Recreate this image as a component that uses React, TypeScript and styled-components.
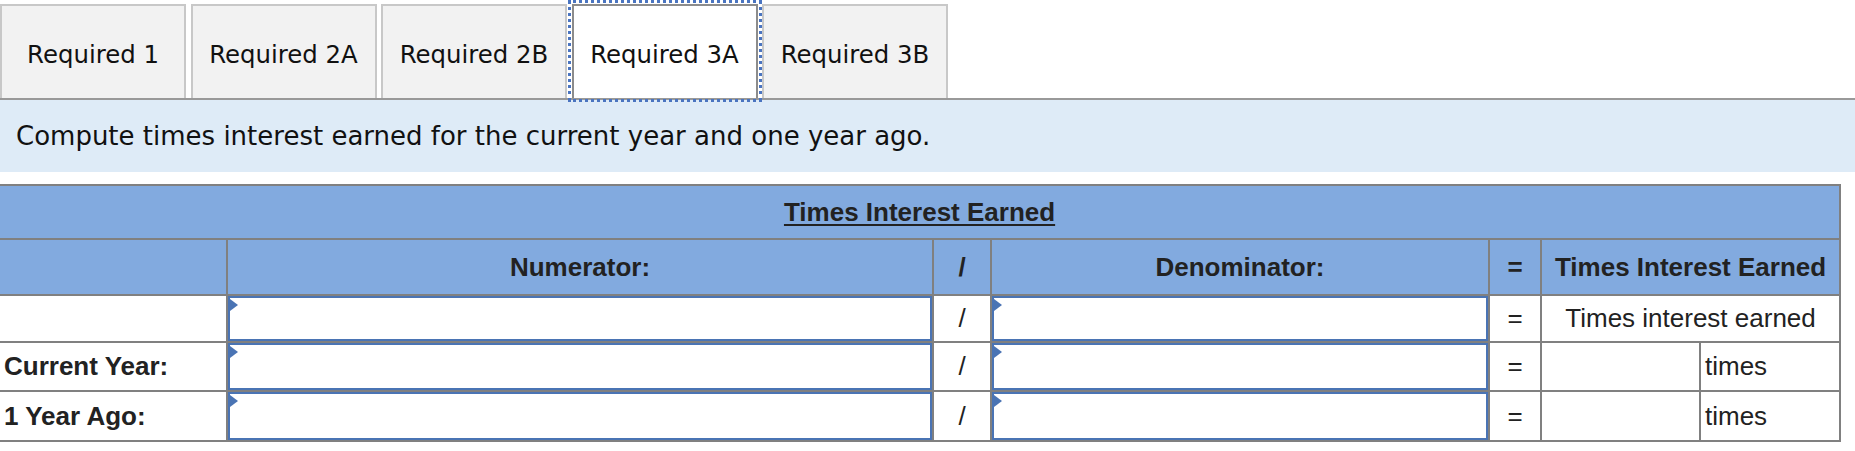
import React from "react";
import styled, { createGlobalStyle } from "styled-components";

const GlobalStyle = createGlobalStyle`
  html, body {
    margin: 0;
    padding: 0;
    background: #ffffff;
  }
`;

const Page = styled.div`
  width: 1855px;
`;

// tabs
const TabBar = styled.div`
  display: flex;
  gap: 4.5px;
  padding-top: 4px;
  height: 94px;
  border-bottom: 2px solid #999999;
`;

const Tab = styled.div<{ $active?: boolean }>`
  position: relative;
  box-sizing: border-box;
  width: 186px;
  height: 94px;
  padding-top: 4px;
  display: flex;
  align-items: center;
  justify-content: center;
  font-family: "DejaVu Sans", Verdana, sans-serif;
  font-size: 24.4px;
  color: #111111;
  background: ${(p) => (p.$active ? "#ffffff" : "#f2f2f2")};
  border: 2px solid ${(p) => (p.$active ? "#8c8c8c" : "#c8c8c8")};
  border-bottom: none;
  outline: ${(p) => (p.$active ? "3px dotted #4a74c0" : "none")};
  outline-offset: 1px;
  z-index: ${(p) => (p.$active ? 1 : 0)};
`;

const Instructions = styled.div`
  height: 72px;
  display: flex;
  align-items: center;
  padding-left: 16px;
  background: #deebf7;
  font-family: "DejaVu Sans", Verdana, sans-serif;
  font-size: 26px;
  color: #111111;
`;

// worksheet table
const Sheet = styled.table`
  margin-top: 12px;
  width: 1840px;
  table-layout: fixed;
  border-collapse: collapse;
  font-family: "Liberation Sans", Arial, sans-serif;
  font-size: 26px;
  color: #222222;
`;

const Cell = styled.td<{ $align?: "left" | "center"; $bold?: boolean; $head?: boolean }>`
  border: 2px solid #808080;
  padding: 0 4px;
  text-align: ${(p) => p.$align ?? "center"};
  font-weight: ${(p) => (p.$bold ? 700 : 400)};
  background: ${(p) => (p.$head ? "#82aadf" : "#ffffff")};
  white-space: nowrap;
  overflow: hidden;

  &:first-child {
    border-left: none;
  }
`;

const Title = styled.span`
  text-decoration: underline;
  text-underline-offset: 3px;
`;

const Row = styled.tr<{ $h: number }>`
  height: ${(p) => p.$h}px;
`;

const InputCell = styled.td`
  border: 2px solid #808080;
  padding: 0;
`;

const InputBox = styled.div<{ $h: number }>`
  position: relative;
  box-sizing: border-box;
  height: ${(p) => p.$h}px;
  border: 2px solid #4a74b4;
  background: #ffffff;
`;

const Marker = styled.span`
  position: absolute;
  left: 0;
  top: 1px;
  width: 0;
  height: 0;
  border-top: 6px solid transparent;
  border-bottom: 6px solid transparent;
  border-left: 8px solid #4a74b4;
`;

const tabs = ["Required 1", "Required 2A", "Required 2B", "Required 3A", "Required 3B"];

const rows = [
  { label: "", h: 47, result: "label" },
  { label: "Current Year:", h: 49, result: "times" },
  { label: "1 Year Ago:", h: 50, result: "times" },
];

const Field: React.FC<{ h: number }> = ({ h }) => (
  <InputCell>
    <InputBox $h={h}>
      <Marker />
    </InputBox>
  </InputCell>
);

export default function App() {
  return (
    <Page>
      <GlobalStyle />
      <TabBar>
        {tabs.map((t) => (
          <Tab key={t} $active={t === "Required 3A"}>
            {t}
          </Tab>
        ))}
      </TabBar>
      <Instructions>Compute times interest earned for the current year and one year ago.</Instructions>
      <Sheet>
        <colgroup>
          <col style={{ width: 227 }} />
          <col style={{ width: 706 }} />
          <col style={{ width: 58 }} />
          <col style={{ width: 498 }} />
          <col style={{ width: 52 }} />
          <col style={{ width: 159 }} />
          <col style={{ width: 140 }} />
        </colgroup>
        <tbody>
          <Row $h={54}>
            <Cell $head $bold colSpan={7}>
              <Title>Times Interest Earned</Title>
            </Cell>
          </Row>
          <Row $h={56}>
            <Cell $head />
            <Cell $head $bold>Numerator:</Cell>
            <Cell $head $bold>/</Cell>
            <Cell $head $bold>Denominator:</Cell>
            <Cell $head $bold>=</Cell>
            <Cell $head $bold colSpan={2}>
              Times Interest Earned
            </Cell>
          </Row>
          {rows.map((r, i) => (
            <Row key={i} $h={r.h}>
              <Cell $align="left" $bold>
                {r.label}
              </Cell>
              <Field h={r.h - 2} />
              <Cell>/</Cell>
              <Field h={r.h - 2} />
              <Cell>=</Cell>
              {r.result === "label" ? (
                <Cell colSpan={2}>Times interest earned</Cell>
              ) : (
                <>
                  <Cell />
                  <Cell $align="left">times</Cell>
                </>
              )}
            </Row>
          ))}
        </tbody>
      </Sheet>
    </Page>
  );
}
